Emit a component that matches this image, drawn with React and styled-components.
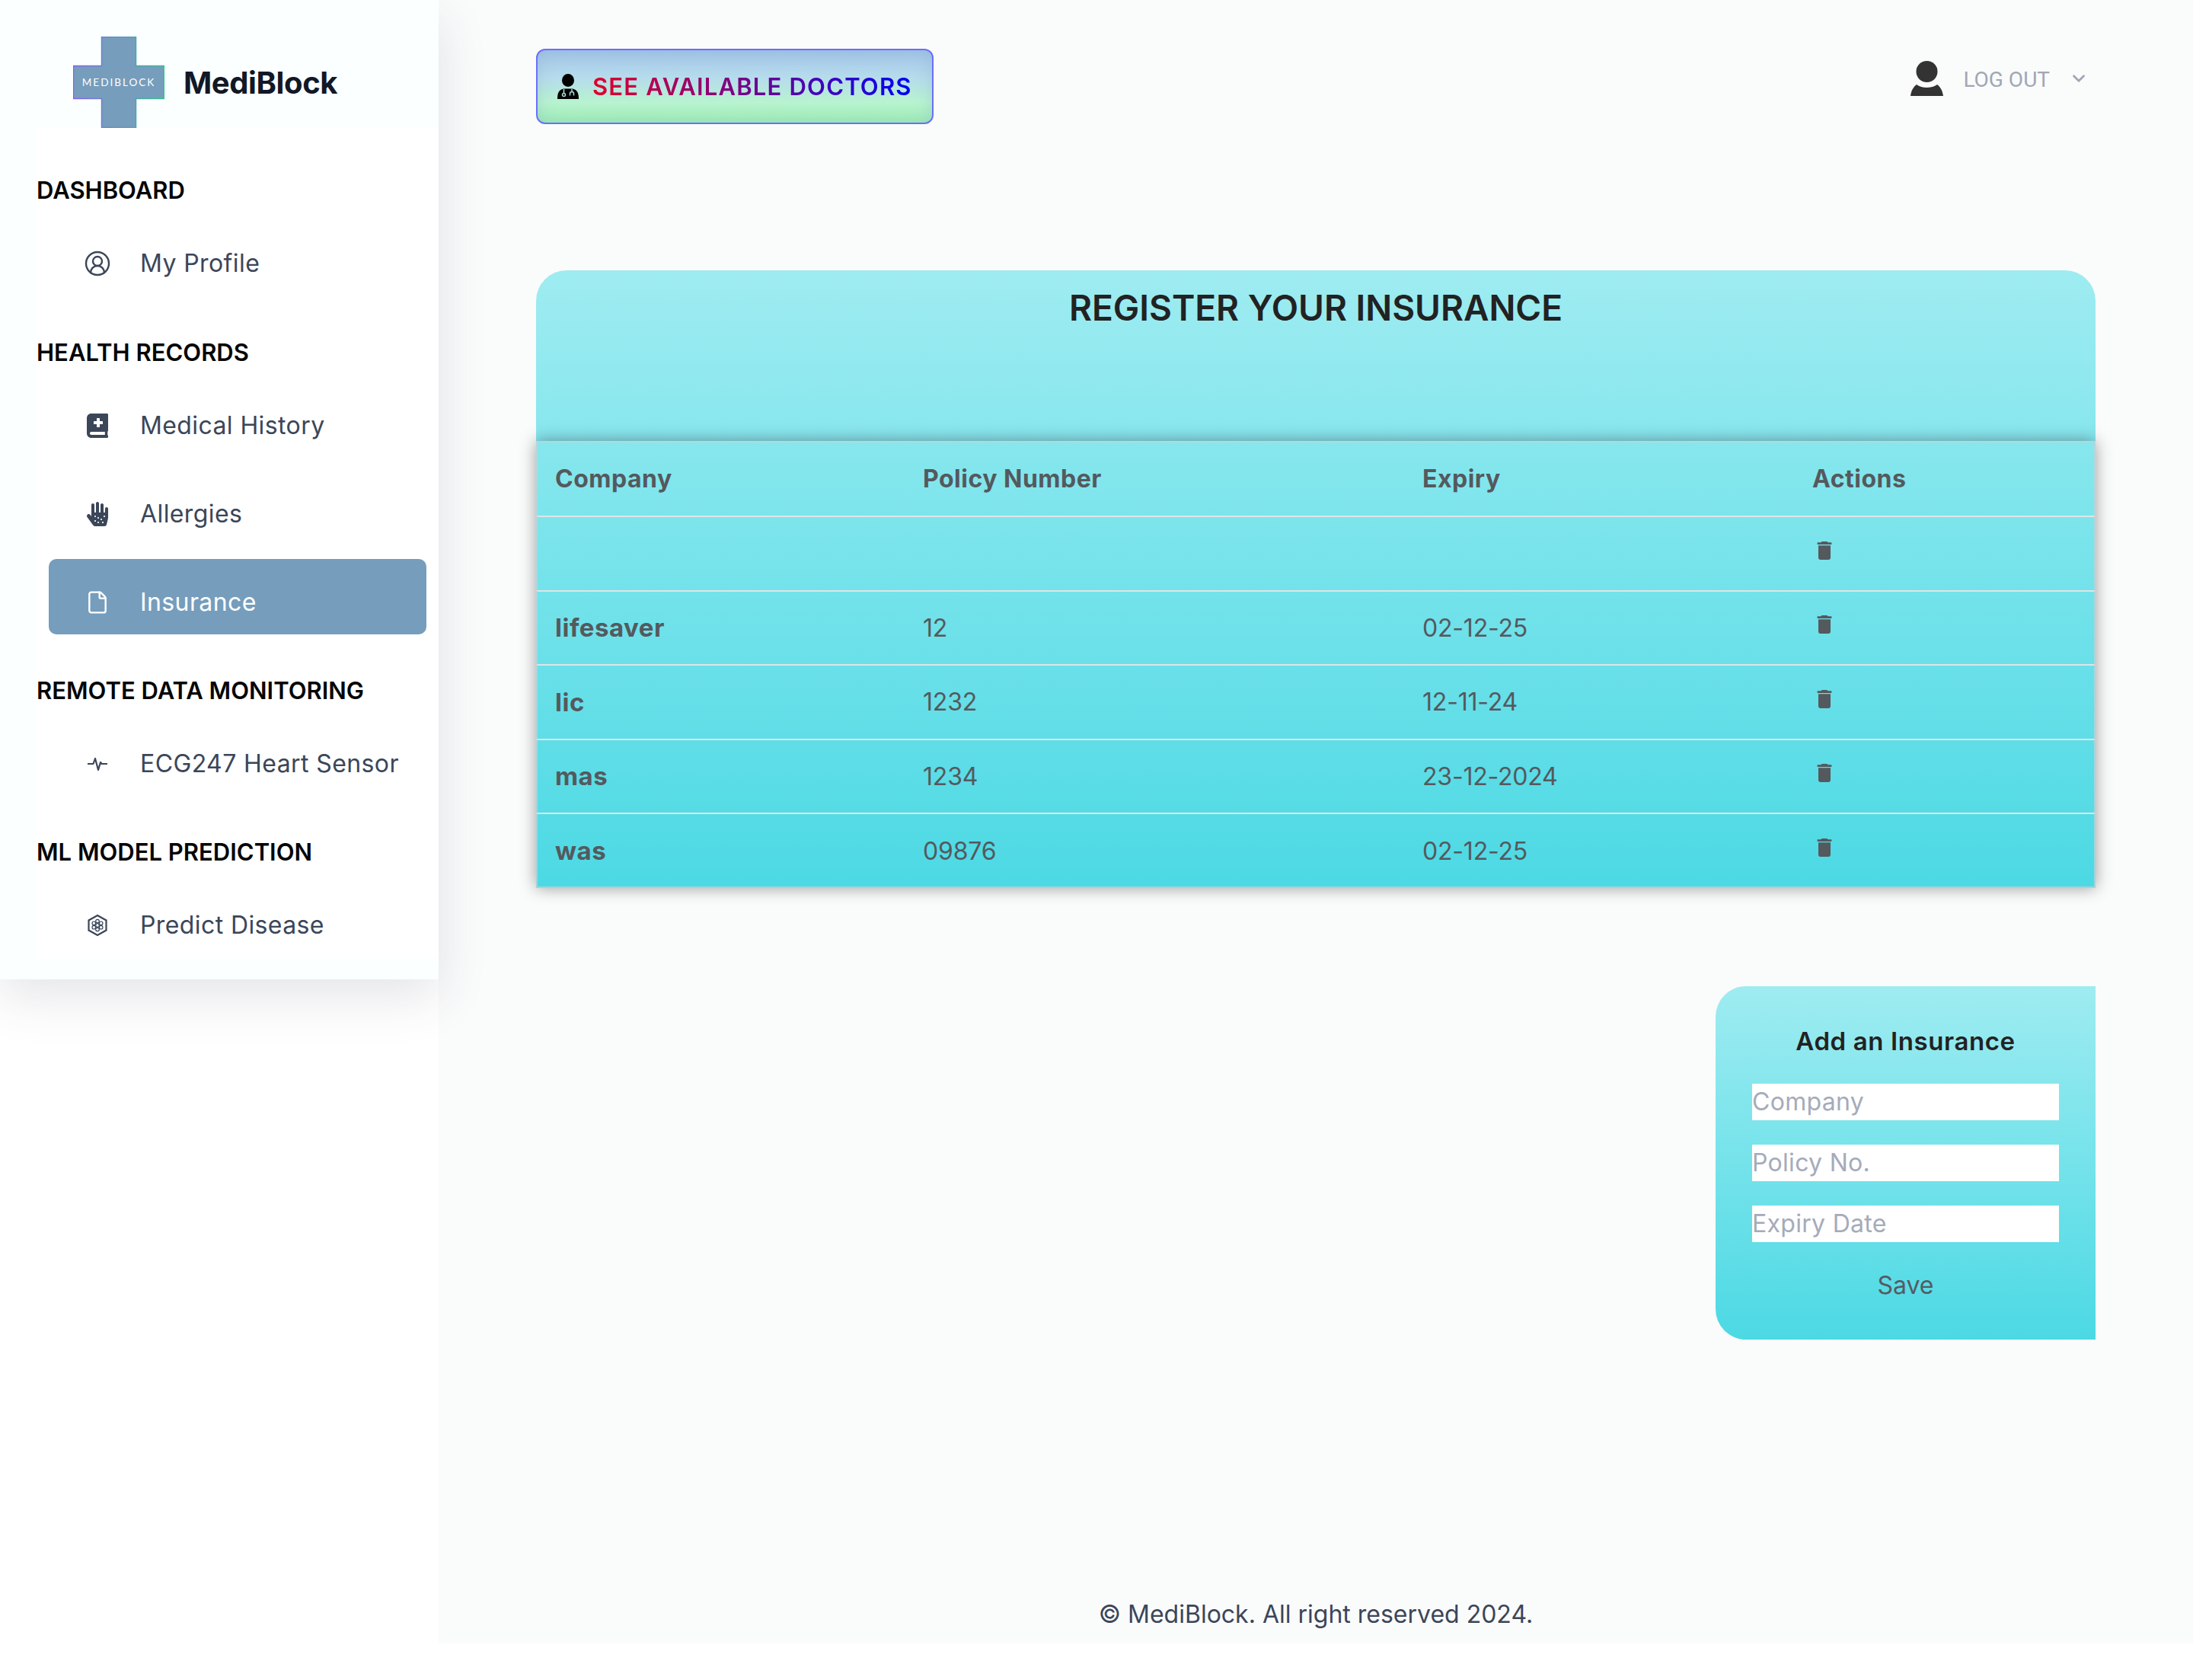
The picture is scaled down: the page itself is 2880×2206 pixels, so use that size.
import React from 'react';
import styled, { createGlobalStyle } from 'styled-components';
import { FaAllergies, FaBookMedical } from 'react-icons/fa';
import { MdDelete } from 'react-icons/md';
import { File, CircleUserRound, ChevronDown } from 'lucide-react';

const GlobalStyle = createGlobalStyle`
    * {
        box-sizing: border-box;
    }
    html, body {
        margin: 0;
        padding: 0;
        background: #fff;
        font-family: Inter, 'Liberation Sans', sans-serif;
    }
`;

const Page = styled.div`
    display: flex;
    align-items: flex-start;
    width: 2880px;
    min-height: 2206px;
    background: #fff;
`;

const Sidebar = styled.aside`
    position: relative;
    z-index: 2;
    flex: 0 0 576px;
    height: 1286px;
    background: #fbffff;
    box-shadow: 0 24px 60px rgba(55, 65, 81, 0.13);
`;

const Brand = styled.div`
    display: flex;
    align-items: center;
    gap: 25px;
    height: 168px;
    padding: 48px 0 0 96px;
`;

const BrandName = styled.span`
    font-size: 40px;
    font-weight: 700;
    letter-spacing: -0.4px;
    color: #111827;
`;

const Nav = styled.nav`
    display: flex;
    flex-direction: column;
    height: 1090px;
    margin-left: 48px;
    padding-top: 58px;
    background: #fff;
`;

const Section = styled.section`
    display: flex;
    flex-direction: column;
    margin-top: ${(p) => p.$gap}px;
`;

const SectionTitle = styled.h3`
    margin: 0 0 15px;
    font-size: 31px;
    line-height: 48px;
    font-weight: 600;
    color: #050505;
`;

const ItemList = styled.div`
    display: flex;
    flex-direction: column;
    gap: 17px;
`;

const Item = styled.a`
    display: flex;
    align-items: center;
    gap: 40px;
    width: 496px;
    height: 99px;
    margin-left: 16px;
    padding: 14px 0 0 48px;
    border-radius: 10px;
    font-size: 32px;
    letter-spacing: 0.4px;
    background: ${(p) => (p.$active ? '#769dbc' : 'transparent')};
    color: ${(p) => (p.$active ? '#fff' : '#3b4659')};
`;

const ItemIcon = styled.span`
    display: flex;
    align-items: center;
    justify-content: center;
    width: 32px;
    height: 32px;
    svg {
        flex: none;
    }
`;

const Main = styled.main`
    flex: 1;
    display: flex;
    flex-direction: column;
    min-height: 2158px;
    padding: 64px 128px 0;
    background: #fafbfb;
`;

const TopBar = styled.header`
    display: flex;
    justify-content: space-between;
    align-items: flex-start;
    height: 99px;
`;

const DoctorsButton = styled.button`
    display: flex;
    align-items: center;
    gap: 18px;
    width: 522px;
    height: 99px;
    padding: 0 0 0 26px;
    border: 2px solid #6b6ffb;
    border-radius: 12px;
    background: linear-gradient(180deg, #a3c5e8 0%, #b6dcec 38%, #b8f3d0 72%, #9fefb6 100%);
    box-shadow: inset 0 0 22px rgba(120, 150, 190, 0.28);
`;

const GradientText = styled.span`
    font-family: Inter, sans-serif;
    font-size: 31px;
    font-weight: 600;
    letter-spacing: 1.2px;
    background: linear-gradient(90deg, #e0002a, #0000f5);
    -webkit-background-clip: text;
    background-clip: text;
    color: transparent;
`;

const Account = styled.div`
    display: flex;
    align-items: center;
    margin: 16px 9px 0 0;
    height: 46px;
    color: #a0a7b5;
`;

const LogOut = styled.span`
    margin: 2px 25px 0 26px;
    font-family: Roboto, sans-serif;
    font-size: 28px;
`;

const Card = styled.section`
    margin-top: 192px;
    border-radius: 40px 40px 0 0;
    background: linear-gradient(180deg, #9eecf1 0%, #4cd9e4 100%);
`;

const CardTitle = styled.h1`
    margin: 0;
    height: 224px;
    padding-top: 17px;
    text-align: center;
    font-size: 46px;
    line-height: 64px;
    font-weight: 600;
    color: #222;
`;

const Table = styled.table`
    width: 100%;
    table-layout: fixed;
    border-collapse: collapse;
    box-shadow: 0 0 20px rgba(0, 0, 0, 0.38);
    outline: 2px solid rgba(200, 208, 214, 0.7);
    outline-offset: -2px;
    color: #54595e;
    font-size: 32px;
`;

const HeadRow = styled.tr`
    height: 99px;
    border-bottom: 2px solid #dfe5e8;
`;

const Row = styled.tr`
    height: 97.5px;
    border-bottom: 2px solid #dfe5e8;
    &:last-child {
        border-bottom: 0;
    }
`;

const HeadCell = styled.th`
    width: ${(p) => p.$width};
    padding: 0 0 0 25px;
    text-align: left;
    font-weight: 700;
    letter-spacing: 0.5px;
`;

const NameCell = styled.td`
    padding: 0 0 0 25px;
    font-size: 33px;
    font-weight: 700;
    letter-spacing: 0.5px;
`;

const Cell = styled.td`
    padding: 0 0 0 25px;
    letter-spacing: -0.2px;
`;

const TrashIcon = styled(MdDelete)`
    display: block;
    margin: -8px 0 0 0;
    font-size: 32px;
`;

const FormCard = styled.form`
    align-self: flex-end;
    display: flex;
    flex-direction: column;
    width: 499px;
    height: 464px;
    margin-top: 129px;
    padding: 48px 48px 0;
    border-radius: 40px 0 0 40px;
    background: linear-gradient(180deg, #9eecf1 0%, #4cd9e4 100%);
`;

const FormTitle = styled.h2`
    margin: 0 0 32px;
    height: 48px;
    text-align: center;
    font-size: 33px;
    line-height: 48px;
    font-weight: 600;
    letter-spacing: 0.6px;
    color: #222;
`;

const Field = styled.input`
    width: 403px;
    height: 48px;
    margin-bottom: 32px;
    padding: 0;
    border: 0;
    border-radius: 0;
    background: #fff;
    font-family: Inter, sans-serif;
    font-size: 32px;
    letter-spacing: 0.3px;
    &::placeholder {
        color: #a5abba;
    }
`;

const SaveButton = styled.button`
    align-self: center;
    margin-top: 5px;
    padding: 0;
    border: 0;
    background: none;
    font-family: Inter, sans-serif;
    font-size: 32px;
    color: #555b63;
`;

const Footer = styled.footer`
    margin-top: auto;
    height: 76px;
    text-align: center;
    font-size: 32px;
    line-height: 76px;
    color: #3b4659;
`;

const LogoMark = () => (
    <svg width="120" height="120" viewBox="0 0 120 120">
        <defs>
            <linearGradient id="crossEdge" x1="0" x2="1" y1="0" y2="0">
                <stop offset="0" stopColor="#8b5cf6" />
                <stop offset="1" stopColor="#2fc48d" />
            </linearGradient>
        </defs>
        <polygon
            points="37.5,0.5 82.5,0.5 82.5,38.5 119.5,38.5 119.5,81.5 82.5,81.5 82.5,119.5 37.5,119.5 37.5,81.5 0.5,81.5 0.5,38.5 37.5,38.5"
            fill="#769dbc"
            stroke="url(#crossEdge)"
            strokeWidth="1.5"
        />
        <text x="60" y="65" textAnchor="middle" fill="#fff" fontFamily="Lato, sans-serif" fontSize="13.5" letterSpacing="2">
            MEDIBLOCK
        </text>
    </svg>
);

const PulseIcon = () => (
    <svg width="28" height="20" viewBox="0 0 28 20" fill="none" stroke="currentColor" strokeWidth="2.2" strokeLinejoin="round">
        <path d="M1 10h7.500l2.500-7 4 15 3-10 1.500 2H27" />
    </svg>
);

const HexIcon = () => (
    <svg width="28" height="30" viewBox="0 0 28 30" fill="none" stroke="currentColor">
        <path d="M14 2l11.500 6.500v13L14 28 2.500 21.500v-13z" strokeWidth="2.200" />
        <g strokeWidth="1.200">
            <circle cx="14" cy="15" r="2.300" />
            <circle cx="14" cy="9.600" r="2.300" />
            <circle cx="14" cy="20.400" r="2.300" />
            <circle cx="9.300" cy="12.300" r="2.300" />
            <circle cx="18.700" cy="12.300" r="2.300" />
            <circle cx="9.300" cy="17.700" r="2.300" />
            <circle cx="18.700" cy="17.700" r="2.300" />
        </g>
    </svg>
);

const DoctorIcon = () => (
    <svg width="28" height="34" viewBox="0 0 28 34">
        <ellipse cx="14" cy="8.500" rx="8" ry="8.500" fill="#000" />
        <path d="M0 33c0-8 2-12 8-13.500h12c6 1.500 8 5.500 8 13.500z" fill="#000" />
        <g fill="none" stroke="#a9dcd8" strokeWidth="1.500">
            <circle cx="8.500" cy="27.500" r="2" />
            <path d="M8.500 25.500V20M19 20v3.500a2.500 2.500 0 0 0-2.500 2.500v2.500M19 23.500a2.500 2.500 0 0 1 2.500 2.500v2.500" />
        </g>
    </svg>
);

const PersonIcon = () => (
    <svg width="43" height="46" viewBox="0 0 43 46">
        <circle cx="21.500" cy="14" r="14" fill="#333" />
        <path d="M0 46c1-7 3.500-11.500 8-15 3.500 2.500 8 4 13.500 4s10-1.500 13.500-4c4.500 3.500 7 8 8 15z" fill="#333" />
    </svg>
);

const sections = [
    {
        title: 'DASHBOARD',
        gap: 0,
        items: [{ label: 'My Profile', icon: <CircleUserRound size={36} strokeWidth={1.6} /> }],
    },
    {
        title: 'HEALTH RECORDS',
        gap: 51,
        items: [
            { label: 'Medical History', icon: <FaBookMedical size={32} /> },
            { label: 'Allergies', icon: <FaAllergies size={32} /> },
            { label: 'Insurance', icon: <File size={32} strokeWidth={1.8} />, active: true },
        ],
    },
    {
        title: 'REMOTE DATA MONITORING',
        gap: 50,
        items: [{ label: 'ECG247 Heart Sensor', icon: <PulseIcon /> }],
    },
    {
        title: 'ML MODEL PREDICTION',
        gap: 50,
        items: [{ label: 'Predict Disease', icon: <HexIcon /> }],
    },
];

const policies = [
    { company: '', number: '', expiry: '' },
    { company: 'lifesaver', number: '12', expiry: '02-12-25' },
    { company: 'lic', number: '1232', expiry: '12-11-24' },
    { company: 'mas', number: '1234', expiry: '23-12-2024' },
    { company: 'was', number: '09876', expiry: '02-12-25' },
];

function App() {
    return (
        <Page>
            <GlobalStyle />
            <Sidebar>
                <Brand>
                    <LogoMark />
                    <BrandName>MediBlock</BrandName>
                </Brand>
                <Nav>
                    {sections.map((section) => (
                        <Section key={section.title} $gap={section.gap}>
                            <SectionTitle>{section.title}</SectionTitle>
                            <ItemList>
                                {section.items.map((item) => (
                                    <Item key={item.label} $active={item.active}>
                                        <ItemIcon>{item.icon}</ItemIcon>
                                        {item.label}
                                    </Item>
                                ))}
                            </ItemList>
                        </Section>
                    ))}
                </Nav>
            </Sidebar>
            <Main>
                <TopBar>
                    <DoctorsButton type="button">
                        <DoctorIcon />
                        <GradientText>SEE AVAILABLE DOCTORS</GradientText>
                    </DoctorsButton>
                    <Account>
                        <PersonIcon />
                        <LogOut>LOG OUT</LogOut>
                        <ChevronDown size={26} strokeWidth={2.6} />
                    </Account>
                </TopBar>
                <Card>
                    <CardTitle>REGISTER YOUR INSURANCE</CardTitle>
                    <Table>
                        <thead>
                            <HeadRow>
                                <HeadCell $width="483px">Company</HeadCell>
                                <HeadCell $width="656px">Policy Number</HeadCell>
                                <HeadCell $width="512px">Expiry</HeadCell>
                                <HeadCell>Actions</HeadCell>
                            </HeadRow>
                        </thead>
                        <tbody>
                            {policies.map((policy) => (
                                <Row key={policy.company + policy.number}>
                                    <NameCell>{policy.company}</NameCell>
                                    <Cell>{policy.number}</Cell>
                                    <Cell>{policy.expiry}</Cell>
                                    <Cell>
                                        <TrashIcon />
                                    </Cell>
                                </Row>
                            ))}
                        </tbody>
                    </Table>
                </Card>
                <FormCard>
                    <FormTitle>Add an Insurance</FormTitle>
                    <Field placeholder="Company" />
                    <Field placeholder="Policy No." />
                    <Field placeholder="Expiry Date" />
                    <SaveButton type="button">Save</SaveButton>
                </FormCard>
                <Footer>© MediBlock. All right reserved 2024.</Footer>
            </Main>
        </Page>
    );
}

export default App;
